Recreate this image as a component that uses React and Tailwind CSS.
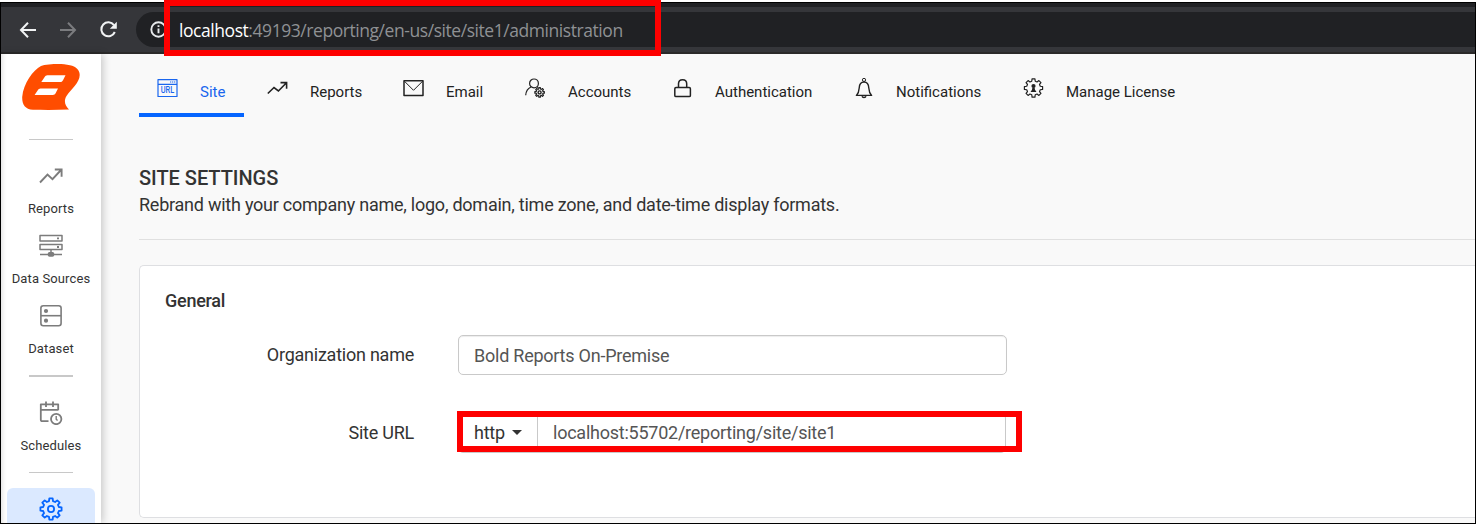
import React from "react";

const svgProps = { fill: "none", stroke: "currentColor", strokeLinejoin: "round" };

const gearPath = (cx, cy, r, depth, teeth) => {
  const pts = [];
  const step = (Math.PI * 2) / teeth;
  for (let i = 0; i < teeth; i++) {
    const a = i * step - Math.PI / 2;
    [[-0.32, r - depth], [-0.2, r], [0.2, r], [0.32, r - depth]].forEach(([o, rad]) => {
      const t = a + o * step;
      pts.push(`${(cx + rad * Math.cos(t)).toFixed(2)} ${(cy + rad * Math.sin(t)).toFixed(2)}`);
    });
  }
  return `M${pts.join("L")}Z`;
};

const UrlIcon = () => (
  <svg className="shrink-0" width="21" height="22" viewBox="0 0 21 22" {...svgProps} strokeWidth="1.2">
    <path d="M1 1.7H20V18.5H1ZM1 6.3H20" />
    <path d="M13 4H18.5" strokeDasharray="1.3 0.7" />
    <text x="10.5" y="15" textAnchor="middle" textLength="13.5" lengthAdjust="spacingAndGlyphs" fontSize="8.4" fontWeight="500" fontFamily="Roboto, sans-serif" fill="currentColor" stroke="none">URL</text>
  </svg>
);
const TrendSmall = () => (
  <svg className="shrink-0" width="21" height="22" viewBox="0 0 21 22" {...svgProps} strokeLinejoin="miter" strokeWidth="1.6">
    <path d="M.8 15.5L7 9.5L11.4 13L19 5.2M13.5 4.6H19.6V10.8" />
  </svg>
);
const MailIcon = () => (
  <svg className="shrink-0" width="21" height="22" viewBox="0 0 21 22" {...svgProps} strokeWidth="1.3">
    <path d="M1 2.8H20V17.5H1Z" strokeWidth="1.5" />
    <path d="M1.5 3.3L10.5 12.3L19.5 3.3" strokeWidth="1" />
  </svg>
);
const AccountIcon = () => (
  <svg className="shrink-0" width="21" height="22" viewBox="0 0 21 22" {...svgProps} strokeWidth="1.2">
    <circle cx="9" cy="5.4" r="4.4" />
    <path d="M.7 17.2C1 12.9 3.3 10.2 6 9M12 8.7L13.2 9.6" />
    <path d={gearPath(14.6, 14.4, 4.8, 1.3, 8)} />
    <circle cx="14.6" cy="14.4" r="1.5" strokeWidth="1.4" />
  </svg>
);
const LockIcon = () => (
  <svg className="shrink-0" width="21" height="22" viewBox="0 0 21 22" {...svgProps} strokeWidth="1.5">
    <rect x="2.8" y="9.6" width="15.6" height="9" rx="1.2" />
    <path d="M6.5 9.5V5.8C6.5 .3 14.7 .3 14.7 5.8V9.5" />
  </svg>
);
const BellIcon = () => (
  <svg className="shrink-0" width="21" height="22" viewBox="0 0 21 22" {...svgProps} strokeWidth="1.4">
    <circle cx="11" cy="1.9" r="1.6" strokeWidth="1" />
    <path d="M3.4 17.4C5.5 15.3 6 13.8 6.2 10C6.4 5.9 8 4 11 4S15.6 5.9 15.8 10C16 13.8 16.5 15.3 18.6 17.4Z" />
    <path d="M9 18.3C9.5 19.8 12.5 19.8 13 18.3" />
  </svg>
);
const LicenseIcon = () => (
  <svg className="shrink-0" width="21" height="22" viewBox="0 0 21 22" {...svgProps} strokeWidth="1.2">
    <path d={gearPath(10.5, 10, 9.2, 2.2, 8)} />
    <circle cx="10.5" cy="8" r="2.1" fill="currentColor" stroke="none" />
    <path d="M9.4 9.5H11.6L12 11.7L13.5 14H7.5L9 11.7Z" fill="currentColor" stroke="none" />
  </svg>
);

const TrendLarge = () => (
  <svg className="shrink-0" width="24" height="24" viewBox="0 0 24 24" {...svgProps} strokeLinejoin="miter" strokeWidth="1.9">
    <path d="M1 18.5L8.5 10.5L13.5 15.2L22 6M15.8 5.5H22.6V12.8" />
  </svg>
);
const ServersIcon = () => (
  <svg className="shrink-0" width="24" height="24" viewBox="0 0 24 24" {...svgProps} strokeWidth="1.5">
    <path d="M1 1.6H23V7H1ZM1 10.4H23V15.6H1ZM1 20.6H23M12 16V20" />
    <path d="M18 4.3H20M18 13H20" strokeWidth="1.8" />
    <rect x="9.5" y="18.7" width="5" height="3.4" rx="1" fill="currentColor" />
  </svg>
);
const DatasetIcon = () => (
  <svg className="shrink-0" width="24" height="24" viewBox="0 0 24 24" {...svgProps} strokeWidth="1.6">
    <rect x="1.9" y="1.7" width="20.2" height="20" rx="2.4" />
    <path d="M2 11.7H22" />
    <circle cx="7" cy="7" r="1.3" fill="currentColor" />
    <circle cx="7" cy="16.7" r="1.3" fill="currentColor" />
  </svg>
);
const ScheduleIcon = () => (
  <svg className="shrink-0" width="24" height="24" viewBox="0 0 24 24" {...svgProps} strokeWidth="1.8">
    <path d="M9.5 20.2H3.3Q1.8 20.2 1.8 18.7V3.3H19.2V9.2M1.8 8.8H19.2M7 .5V6M14 .5V6" />
    <circle cx="17.2" cy="18" r="5.2" />
    <path d="M17.2 15V18.2L18.6 19.6" strokeWidth="1.4" />
  </svg>
);
const SettingsIcon = () => (
  <svg className="shrink-0" width="24" height="24" viewBox="0 0 24 24" {...svgProps} strokeWidth="1.8">
    <path d={gearPath(12, 12, 10.7, 2.6, 8)} />
    <circle cx="12" cy="12" r="3.1" />
  </svg>
);

const Logo = () => (
  <svg className="shrink-0" width="58" height="46" viewBox="0 0 58 46">
    <path d="M27 .5C37 -.4 42 .2 48 1.2C54 2.4 57.8 6 57.7 11C57.5 19 49.5 24.5 44.5 32C41.5 37 43 41.5 47 45.5C35 46.1 22 46 11 45.8C3 45.3 0 40 .2 33C1.5 19 11 6.5 19 2Q21.5 .7 27 .5Z" fill="#ff4d00" />
    <path d="M23 12.4C24 11.4 25 11.2 26.5 11.2H43.5L41 16.2C40.3 17.6 39.4 18 38 18H19.3ZM16.3 25.5C17.2 24.5 18 24.4 19.4 24.4H36L33.6 29.3C33 30.6 32.2 31 30.8 31H12.6Z" fill="#fff" />
  </svg>
);

const tabs = [
  { label: "Site", Icon: UrlIcon, width: "w-[105px]", active: true },
  { label: "Reports", Icon: TrendSmall, width: "w-[131px]" },
  { label: "Email", Icon: MailIcon, width: "w-[117px]" },
  { label: "Accounts", Icon: AccountIcon, width: "w-[142px]" },
  { label: "Authentication", Icon: LockIcon, width: "w-[176px]" },
  { label: "Notifications", Icon: BellIcon, width: "w-[165px]" },
  { label: "Manage License", Icon: LicenseIcon, width: "w-[190px]" },
];

const SideItem = ({ label, Icon }) => (
  <div className="flex h-[70px] shrink-0 flex-col items-center text-[#7c7c7c]">
    <Icon />
    <span className="mt-3 text-[13px] leading-[18px] tracking-[0.12px] whitespace-nowrap text-[#333]">{label}</span>
  </div>
);

const BrowserBar = () => (
  <header className="flex h-[51px] shrink-0 flex-col border-t-4 border-b-2 border-[#202124] border-b-[#2b2a2a] bg-[#35363a] pt-[5px]">
    <div className="flex h-[35px] items-center">
      <svg className="ml-[18px]" width="18" height="18" viewBox="0 0 18 18" fill="none" stroke="#f1f3f4" strokeWidth="2">
        <path d="M17 9H2.5M9 1.8L2 9L9 16.2" />
      </svg>
      <svg className="ml-[22px]" width="18" height="18" viewBox="0 0 18 18" fill="none" stroke="#7b7c7f" strokeWidth="2">
        <path d="M1 9H15.5M9 1.8L16 9L9 16.2" />
      </svg>
      <svg className="ml-[22px]" width="19" height="18" viewBox="0 0 19 18" fill="none" stroke="#f1f3f4" strokeWidth="2">
        <path d="M15 4.2A7 7 0 1 0 15.8 11" />
        <path d="M17.8 .8V7.7H10.8Z" fill="#f1f3f4" stroke="none" />
      </svg>
      <div className="ml-[18px] flex h-[35px] flex-1 items-center rounded-l-full bg-[#202124] pl-[14px]">
        <svg width="17" height="17" viewBox="0 0 17 17" fill="none" stroke="#e8eaed" strokeWidth="1.9">
          <circle cx="8.5" cy="8.5" r="7.2" />
          <path d="M8.5 7.5V12.2M8.5 4.3V6" />
        </svg>
        <span className="ml-3 font-['Open_Sans',sans-serif] text-[17.5px] leading-6 tracking-[-0.44px] whitespace-nowrap text-[#8f9194]">
          <span className="text-white">localhost</span>:49193/reporting/en-us/site/site1/administration
        </span>
      </div>
    </div>
  </header>
);

export default function App() {
  return (
    <div className="relative h-[524px] w-[1476px] overflow-hidden bg-white pt-[2px] font-[Roboto,sans-serif]">
      <div className="flex h-[522px] flex-col overflow-hidden border border-black bg-[#f9f9f9]">
        <BrowserBar />
        <div className="flex min-h-0 flex-1">
          <aside className="z-10 flex w-[100px] shrink-0 flex-col items-center bg-white pt-[10px] shadow-[2px_0_8px_rgba(0,0,0,0.2),inset_5px_0_5px_-4px_rgba(0,0,0,0.15)]">
            <Logo />
            <div className="mt-[29px] h-px w-11 shrink-0 bg-[#c8c8c8]" />
            <div className="h-6 shrink-0" />
            <SideItem label="Reports" Icon={TrendLarge} />
            <SideItem label="Data Sources" Icon={ServersIcon} />
            <SideItem label="Dataset" Icon={DatasetIcon} />
            <div className="mt-[1px] h-[2px] w-11 shrink-0 bg-[#c8c8c8]" />
            <div className="h-6 shrink-0" />
            <SideItem label="Schedules" Icon={ScheduleIcon} />
            <div className="mt-px h-px w-11 shrink-0 bg-[#c8c8c8]" />
            <div className="mt-[15px] flex h-16 w-[88px] shrink-0 justify-center rounded-md bg-[#dbe9ff] pt-[9px] text-[#0565ff]">
              <SettingsIcon />
            </div>
          </aside>
          <main className="min-w-0 flex-1 pl-[38px]">
            <nav className="flex h-[63px] gap-[5px]">
              {tabs.map(({ label, Icon, width, active }) => (
                <div key={label} className={`${width} flex shrink-0 border-b-4 pl-[18px] pt-[24px] ${active ? "border-[#0565ff] text-[#1a66ee]" : "border-transparent text-[#222]"}`}>
                  <Icon />
                  <span className="mt-[4px] ml-[22px] text-[15px] leading-5 whitespace-nowrap">{label}</span>
                </div>
              ))}
            </nav>
            <h1 className="mt-[48px] text-[20px] leading-[27px] font-medium tracking-[-0.03px] text-[#333]">SITE SETTINGS</h1>
            <p className="text-[18px] leading-[26px] tracking-[-0.24px] text-[#333]">Rebrand with your company name, logo, domain, time zone, and date-time display formats.</p>
            <hr className="mt-[21px] border-[#e0e0e0]" />
            <section className="mt-[25px] h-[253px] rounded-l-[5px] border border-r-0 border-[#dedfe2] bg-white pt-[23px] pl-[25px]">
              <h2 className="text-[18px] leading-6 font-medium tracking-[-0.25px] text-[#333]">General</h2>
              <div className="mt-[22px] flex h-10 items-center text-[18px] tracking-[-0.24px]">
                <label className="mr-[44px] w-[249px] pb-[2px] text-right text-[#333]">Organization name</label>
                <div className="flex h-10 w-[549px] items-center rounded-[5px] border border-[#c9c9c9] pl-[15px] text-[#555] shadow-[inset_0_1px_1px_rgba(0,0,0,0.075)]">Bold Reports On-Premise</div>
              </div>
              <div className="mt-[38px] flex h-10 items-center text-[18px] tracking-[-0.24px]">
                <label className="mr-[44px] w-[249px] pb-[2px] text-right text-[#333]">Site URL</label>
                <div className="flex h-10 w-[548px] items-center rounded-[5px] border border-[#c9c9c9]">
                  <div className="flex h-full w-[79px] items-center border-r border-[#c9c9c9] pb-[2px] pl-[15px] text-[#333]">
                    http
                    <svg className="mt-px ml-[7px]" width="10" height="5" viewBox="0 0 10 5"><path d="M0 0H10L5 5Z" fill="#333" /></svg>
                  </div>
                  <span className="pb-[2px] pl-[15px] text-[#555]">localhost:55702/reporting/site/site1</span>
                </div>
              </div>
            </section>
          </main>
        </div>
      </div>
      <div className="absolute top-0 left-[164px] z-20 h-[56px] w-[497px] border-6 border-[#fe0000]" />
      <div className="absolute top-[411px] left-[457px] z-20 h-[41px] w-[565px] border-6 border-[#fe0000]" />
    </div>
  );
}
